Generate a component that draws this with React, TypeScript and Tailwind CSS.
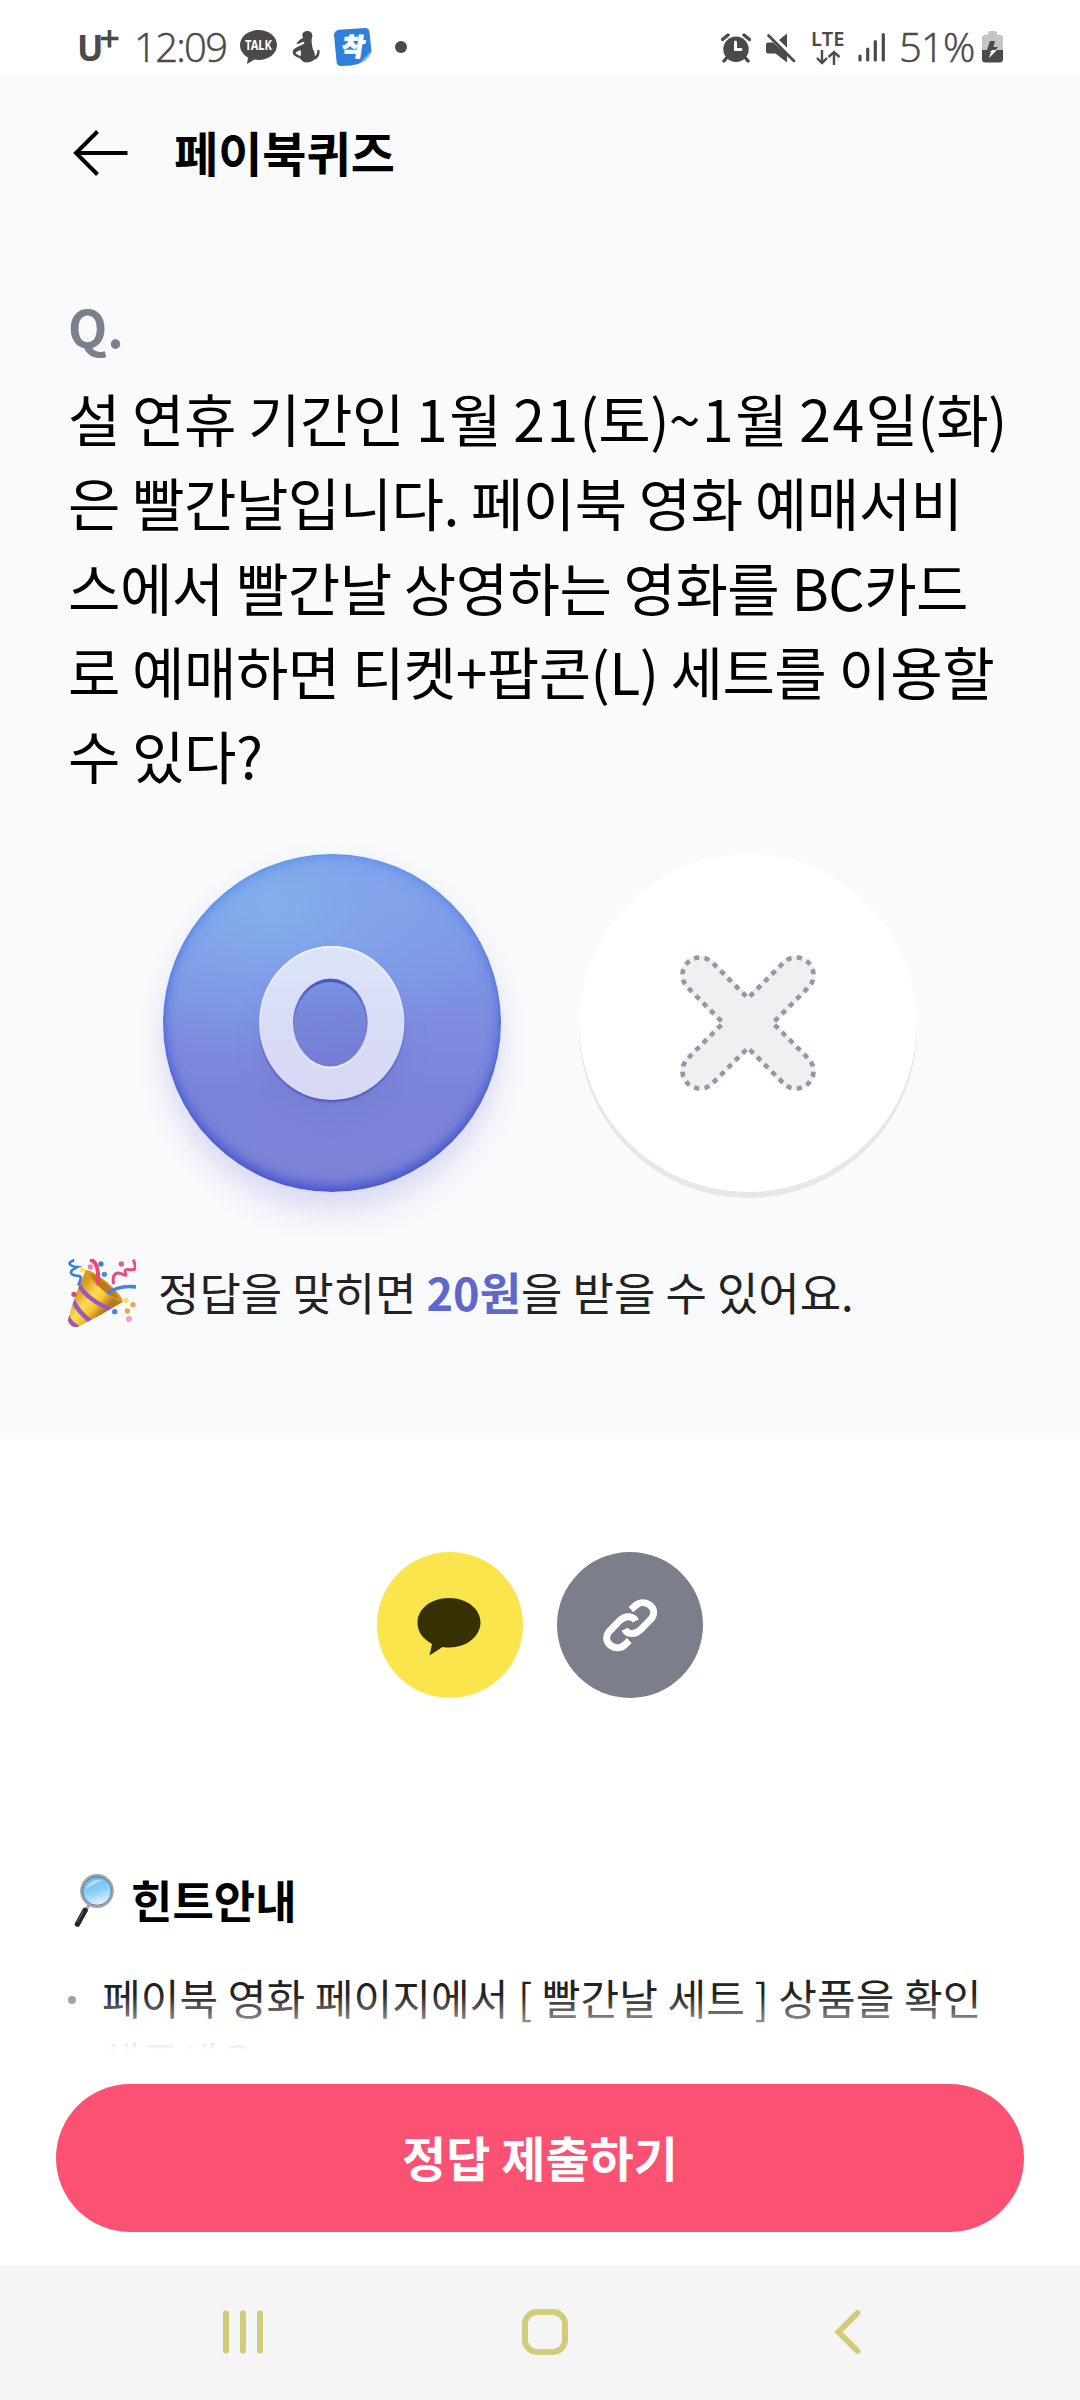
import React from "react";

const INK = "#4a4a4a";

function StatusBar() {
  return (
    <header className="flex h-[75px] items-start justify-between bg-white pl-[77px] pr-[77px] text-[#4a4a4a]">
      <div className="flex h-[75px] items-start">
        <div className="mt-[26px] flex w-[57px] items-start font-['Noto_Sans']">
          <span className="mt-[1px] text-[35px] leading-[42px] font-bold">U</span>
          <svg width="18" height="18" viewBox="0 0 18 18" className="-ml-[2px] mt-[4px]">
            <path d="M8.5 0V17.5M0 8.5H17.5" stroke={INK} strokeWidth="3.6" />
          </svg>
        </div>
        <span className="mt-[19px] block w-[106px] whitespace-nowrap font-['Open_Sans'] text-[40px] leading-[56px] font-[350] tracking-[-1.7px] [-webkit-text-stroke:0.5px_#4a4a4a]">
          12:09
        </span>
        <svg width="37" height="36" viewBox="0 0 37 36" className="mt-[29px]">
          <path
            d="M18.5 1C8.300 1 0 7.500 0 16C0 21.500 3.300 25.800 8 28.500L7 35L14.500 30.600C16 30.900 17.200 31 18.500 31C28.700 31 37 24.500 37 16C37 7.500 28.700 1 18.500 1Z"
            fill={INK}
          />
          <text x="18.5" y="20.500" textAnchor="middle" textLength="27" lengthAdjust="spacingAndGlyphs" fontSize="13.5" fontWeight="700" fontFamily="Noto Sans" fill="#fff">
            TALK
          </text>
        </svg>
        <svg width="28" height="32" viewBox="0 0 84 96" className="ml-[15px] mt-[31px]">
          <path
            d="M46 0C56 0 62 7 61 16C60 23 58 26 59 34C61 45 60 49 64 57C68 63 69 70 68 76C74 73 76 66 76 57L82 56C85 70 79 83 66 86C58 94 47 96 36 93C29 91 29 85 22 81C12 78 2 73 2 63C3 53 16 48 27 43C33 40 37 38 37 32C29 32 23 39 13 39C18 30 25 24 33 21C27 9 35 0 46 0ZM25 57L11 64C11 70 20 72 25 76C28 69 28 63 25 57Z"
            fill={INK}
            fillRule="evenodd"
          />
        </svg>
        <svg width="38" height="38" viewBox="0 0 38 38" className="ml-[14px] mt-[28px]">
          <path
            d="M5 1.800L31 0Q35 0 35.500 4L37.500 24Q32 36 17 37.500L7 38Q3 38 2.600 34L0 7Q0 3 5 1.800Z"
            fill="#2f7fdc"
          />
          <path d="M37.500 23L26 34.500Q35 31 37.500 23Z" fill="#8bbcf3" />
          <text
            x="19"
            y="28"
            textAnchor="middle"
            fontSize="25"
            fontWeight="900"
            fontFamily="Noto Sans CJK KR"
            fill="#fff"
            stroke="#fff"
            strokeWidth="0.8"
            transform="translate(3.500 0) skewX(-9)"
          >
            착
          </text>
        </svg>
        <span className="ml-[23px] mt-[41px] block size-[12px] rounded-full bg-[#4a4a4a]" />
      </div>

      <div className="flex h-[75px] items-start">
        <svg width="30" height="30" viewBox="0 0 30 30" className="mt-[33px]">
          <circle cx="15" cy="16.300" r="12.700" fill={INK} />
          <path d="M1.500 6.500L7 2M28.500 6.500L23 2M5.500 25L3 28M24.500 25L27 28" stroke={INK} strokeWidth="3.400" strokeLinecap="round" />
          <path d="M14.500 9V16.500H20" stroke="#fff" strokeWidth="3" strokeLinecap="round" fill="none" />
        </svg>
        <svg width="30" height="30" viewBox="0 0 30 30" className="ml-[15px] mt-[33px]">
          <path d="M0 11.500Q0 9.500 2 9.500H7L21 22V29.500L9.500 20.500H2Q0 20.500 0 18.500ZM13 7L21 0.500V14.500Z" fill={INK} />
          <path d="M2.500 2.500L28 28" stroke={INK} strokeWidth="2.600" strokeLinecap="round" />
        </svg>
        <div className="ml-[16px] mt-[30px] w-[36px]">
          <div className="-ml-[1px] font-['Noto_Sans'] text-[20px] leading-[18px] font-semibold tracking-[0.2px]">LTE</div>
          <svg width="24" height="15" viewBox="0 0 24 15" className="ml-[4px] mt-[2px]">
            <path d="M6 0V13M1 8L6 13L11 8M18 15V2M12.500 7L18 2L23.500 7" stroke={INK} strokeWidth="2.400" fill="none" />
          </svg>
        </div>
        <svg width="28" height="30" viewBox="0 0 28 30" className="ml-[10px] mt-[32px]">
          <path d="M2 24V28M9.700 17V28M17.300 9.500V28M25.300 2.500V28" stroke={INK} strokeWidth="3.200" strokeLinecap="round" />
        </svg>
        <span className="ml-[13px] mt-[19px] block w-[83px] whitespace-nowrap font-['Open_Sans'] text-[40px] leading-[56px] font-[350] tracking-[-0.8px] [-webkit-text-stroke:0.5px_#4a4a4a]">
          51%
        </span>
        <svg width="21" height="32" viewBox="0 0 21 32" className="mt-[31px]">
          <path d="M6 2Q6 0 8 0H13Q15 0 15 2V4H18Q21 4 21 7V19H0V7Q0 4 3 4H6Z" fill="#c4c4c4" />
          <path d="M0 19H21V28Q21 31.500 17.500 31.500H3.500Q0 31.500 0 28Z" fill={INK} />
          <path d="M8 10H13L11.500 16H16L13.500 19H5Z" fill={INK} />
          <path d="M10.500 19H15L7 27L9 21H7.500Z" fill="#fff" />
        </svg>
      </div>
    </header>
  );
}

function PartyPopper() {
  return (
    <svg width="68" height="68" viewBox="54 57 204 204" fill="none">
      <defs>
        <linearGradient id="cone" x1="75" y1="160" x2="150" y2="225" gradientUnits="userSpaceOnUse">
          <stop offset="0" stopColor="#d89a20" />
          <stop offset="0.45" stopColor="#fbdc52" />
          <stop offset="0.7" stopColor="#f6c832" />
          <stop offset="1" stopColor="#b9791a" />
        </linearGradient>
        <clipPath id="coneClip">
          <path d="M107 91L218 186Q150 228 84 260Q56 266 54 240Q72 170 107 91Z" />
        </clipPath>
      </defs>
      <path d="M107 91L218 186Q150 228 84 260Q56 266 54 240Q72 170 107 91Z" fill="url(#cone)" />
      <g clipPath="url(#coneClip)" stroke="#9b55c4" strokeWidth="13">
        <path d="M88 136Q112 180 182 208" />
        <path d="M68 180Q84 215 124 246" />
        <path d="M52 228Q60 250 84 262" />
      </g>
      <path d="M107 90C132 88 218 160 219 186C196 190 112 116 107 90Z" fill="#d99a24" />
      <path d="M121 101C144 102 200 156 208 178C176 168 136 137 121 101Z" fill="#bd7a17" />
      <path d="M120 59C139 62 147 86 144 134" stroke="#ed476d" strokeWidth="12" />
      <path d="M172 161C196 142 230 137 260 141" stroke="#4583e5" strokeWidth="11" />
      <path d="M73 60C48 69 60 79 82 81C54 94 60 105 79 107C101 108 91 116 85 137" stroke="#3b7edb" strokeWidth="8" />
      <path d="M191 132C184 98 202 92 224 106C236 108 211 84 239 89C260 92 259 82 250 59" stroke="#ec4b7d" strokeWidth="9" />
      <g>
        <circle cx="153" cy="72" r="8" fill="#3c7fdd" />
        <circle cx="163" cy="103" r="8" fill="#4b86e6" />
        <circle cx="194" cy="215" r="8" fill="#4b82dd" />
        <circle cx="214" cy="72" r="8" fill="#e95a7e" />
        <circle cx="72" cy="163" r="8" fill="#c9516c" />
        <circle cx="121" cy="81" r="8" fill="#ed86a8" />
        <circle cx="237" cy="237" r="9" fill="#eea0c5" />
        <circle cx="97" cy="90" r="8" fill="#f6e65b" />
        <circle cx="228" cy="181" r="8" fill="#f5e15c" />
        <circle cx="232" cy="213" r="8" fill="#efa149" />
        <circle cx="249" cy="194" r="8" fill="#f0a458" />
      </g>
    </svg>
  );
}

function Magnifier() {
  return (
    <svg width="40" height="54" viewBox="0 0 40 54">
      <defs>
        <linearGradient id="lens" x1="16" y1="4" x2="26" y2="34" gradientUnits="userSpaceOnUse">
          <stop offset="0" stopColor="#63b7f2" />
          <stop offset="0.5" stopColor="#8fd0fb" />
          <stop offset="1" stopColor="#eef8ff" />
        </linearGradient>
      </defs>
      <path d="M15.500 31L11 39" stroke="#a9a9a9" strokeWidth="3" />
      <path d="M11 37.500L3.500 51" stroke="#262626" strokeWidth="5.500" strokeLinecap="round" />
      <path d="M9.500 38L3 49" stroke="#666" strokeWidth="1" />
      <circle cx="23" cy="18" r="15.700" fill="url(#lens)" stroke="#a3a5a8" strokeWidth="2.400" />
      <circle cx="23" cy="18" r="14.300" fill="none" stroke="#4d7391" strokeWidth="0.900" />
      <path d="M12 16C14 9 20 6 28 7C21 11 16 13 12 16Z" fill="#fff" opacity="0.450" />
    </svg>
  );
}

const ARM = "M0 -24.75L35.6 -60.4A17.5 17.5 0 0 1 60.4 -35.6L24.75 0";

function Choices() {
  return (
    <div className="flex h-[338px] gap-[78px] pl-[163px]">
      <button
        aria-label="O"
        className="flex size-[338px] items-center justify-center rounded-full bg-[radial-gradient(ellipse_70%_46%_at_32%_15%,rgba(131,176,235,1)_0%,rgba(130,170,235,0.6)_40%,rgba(126,146,228,0)_100%),linear-gradient(180deg,#82a0ea_0%,#7f96e6_30%,#7e8cdf_50%,#7c84d9_70%,#7c83d7_100%)] shadow-[0_22px_28px_rgba(95,90,215,0.16),0_4px_24px_rgba(95,90,215,0.05),inset_0_-6px_11px_rgba(66,76,202,0.9),inset_0_3px_14px_rgba(90,150,240,0.75)]"
      >
        <svg width="200" height="200" viewBox="-100 -100 200 200" fillRule="evenodd" className="overflow-visible">
          <defs>
            <linearGradient id="ring" x1="0" y1="-77" x2="0" y2="77" gradientUnits="userSpaceOnUse">
              <stop offset="0" stopColor="#dce4f8" />
              <stop offset="0.5" stopColor="#d9dcf7" />
              <stop offset="1" stopColor="#d8d8f4" />
            </linearGradient>
            <linearGradient id="outerGlow" x1="0" y1="-77" x2="0" y2="10" gradientUnits="userSpaceOnUse">
              <stop offset="0" stopColor="#eef2fd" />
              <stop offset="1" stopColor="#eef2fd" stopOpacity="0" />
            </linearGradient>
            <linearGradient id="innerGlow" x1="0" y1="0" x2="0" y2="45" gradientUnits="userSpaceOnUse">
              <stop offset="0" stopColor="#f0f0fc" stopOpacity="0" />
              <stop offset="1" stopColor="#f0f0fc" />
            </linearGradient>
            <linearGradient id="innerShade" x1="0" y1="-45" x2="0" y2="0" gradientUnits="userSpaceOnUse">
              <stop offset="0" stopColor="#4652b9" />
              <stop offset="1" stopColor="#5a66c8" stopOpacity="0" />
            </linearGradient>
            <filter id="soft" x="-40%" y="-40%" width="180%" height="190%">
              <feGaussianBlur stdDeviation="16" />
            </filter>
            <filter id="edge" x="-10%" y="-10%" width="120%" height="120%">
              <feGaussianBlur stdDeviation="0.9" />
            </filter>
          </defs>
          <ellipse cx="0" cy="18" rx="68" ry="70" fill="#656bcb" opacity="0.320" filter="url(#soft)" />
          <path
            d="M-72.500 2.500a72.200 76.500 0 1 0 144.400 0a72.200 76.500 0 1 0 -144.400 0ZM-39 0a37.300 44.400 0 1 0 74.600 0a37.300 44.400 0 1 0 -74.600 0Z"
            fill="#4a55bb"
            filter="url(#edge)"
          />
          <ellipse cx="-1.700" cy="0.800" rx="37" ry="43.200" fill="none" stroke="url(#innerShade)" strokeWidth="3" />
          <path
            d="M-73 0a72.700 77 0 1 0 145.400 0a72.700 77 0 1 0 -145.400 0ZM-39 0a37.300 44.400 0 1 0 74.600 0a37.300 44.400 0 1 0 -74.600 0Z"
            fill="url(#ring)"
          />
          <ellipse cx="-0.300" cy="0" rx="71.700" ry="76" fill="none" stroke="url(#outerGlow)" strokeWidth="2" />
          <ellipse cx="-1.700" cy="0" rx="37.300" ry="44.400" fill="none" stroke="url(#innerGlow)" strokeWidth="2" />
        </svg>
      </button>
      <button
        aria-label="X"
        className="flex size-[338px] items-center justify-center rounded-full bg-white shadow-[0_6px_0_#e5e7e8]"
      >
        <svg width="160" height="160" viewBox="-80 -80 160 160">
          <path d="M-48 -48L48 48M48 -48L-48 48" stroke="#f0f0f3" strokeWidth="39" strokeLinecap="round" />
          {[0, 90, 180, 270].map((angle) => (
            <path
              key={angle}
              d={ARM}
              transform={`rotate(${angle})`}
              pathLength={150}
              fill="none"
              stroke="#9598a2"
              strokeWidth="4.600"
              strokeDasharray="5 5"
              strokeDashoffset="-2.5"
            />
          ))}
        </svg>
      </button>
    </div>
  );
}

function Num({ children }: { children: React.ReactNode }) {
  return <span className="tracking-[1.5px]">{children}</span>;
}

function Quiz() {
  return (
    <section className="h-[1364px] bg-[#f9fafc]">
      <div className="flex h-[155px] items-center pl-[73px]">
        <svg width="55" height="46" viewBox="0 0 55 46" fill="none">
          <path d="M24.500 1.500L3 23L24.500 44.500M3 23H54.500" stroke="#000" strokeWidth="4" />
        </svg>
        <h1 className="-mt-[3px] ml-[46px] text-[48px] leading-[70px] font-bold">페이북퀴즈</h1>
      </div>
      <div className="mt-[58px] pl-[68px] text-[51px] leading-[76px] font-bold text-[#7c7f8c]">Q.</div>
      <div className="mt-[11px] whitespace-nowrap pl-[68px] text-[57px] leading-[84.36px] tracking-[-0.55px] text-black">
        <p>
          설 연휴 기간인 <Num>1</Num>월 <Num>21</Num>(토)<Num>~1</Num>월 <Num>24</Num>일(화)
        </p>
        <p>은 빨간날입니다. 페이북 영화 예매서비</p>
        <p>스에서 빨간날 상영하는 영화를 BC카드</p>
        <p>로 예매하면 티켓+팝콘(L) 세트를 이용할</p>
        <p>수 있다?</p>
      </div>
      <div className="mt-[57px]">
        <Choices />
      </div>
      <div className="mt-[67px] flex h-[68px] items-center pl-[68px]">
        <PartyPopper />
        <p className="-mt-[2px] ml-[22px] whitespace-nowrap text-[45px] leading-[66px] text-[#222]">
          정답을 맞히면 <strong className="font-bold text-[#5f66cc]">20원</strong>을 받을 수 있어요.
        </p>
      </div>
    </section>
  );
}

function LinkIcon() {
  const half = "M812 238L826 225C853 202 896 232 874 264L841 298C825 314 801 314 793 297";
  return (
    <svg width="54.300" height="54.300" viewBox="728 203 163 163" fill="none" stroke="#fff" strokeWidth="21">
      <path d={half} />
      <path d={half} transform="rotate(180 809.5 284.5)" />
    </svg>
  );
}

function Share() {
  return (
    <div className="mt-[113px] flex h-[146px] justify-center gap-[34px]">
      <button aria-label="KakaoTalk" className="flex size-[146px] items-center justify-center rounded-full bg-[#fae54d]">
        <svg width="64" height="58" viewBox="0 0 64 58" className="-ml-[2px] mt-[3px]">
          <path d="M32 0C14 0 0.500 11 0.500 24.500C0.500 34 6 41 15 46L12.500 57.500L25.500 49Q29 49.500 32 49.500C50 49.500 63.500 38 63.500 24.500C63.500 11 50 0 32 0Z" fill="#373002" />
        </svg>
      </button>
      <button aria-label="Link" className="flex size-[146px] items-center justify-center rounded-full bg-[#7c7f8b]">
        <LinkIcon />
      </button>
    </div>
  );
}

function Hint() {
  return (
    <section className="relative mt-[166px] h-[186px] overflow-hidden">
      <div className="flex h-[72px] items-center pl-[74px]">
        <Magnifier />
        <h2 className="-mt-px ml-[17px] text-[45px] leading-[66px] font-bold">힌트안내</h2>
      </div>
      <div className="mt-[29px] flex pl-[68px]">
        <span className="mt-[31px] block size-[8px] rounded-full bg-[#999]" />
        <p className="ml-[26px] whitespace-nowrap text-[42px] leading-[63px] tracking-[0.1px] text-[#222]">
          페이북 영화 페이지에서 [ 빨간날 세트 ] 상품을 확인
          <br />
          해주세요.
        </p>
      </div>
      <div className="absolute inset-x-0 bottom-0 h-[56px] bg-linear-to-b from-white/0 to-white" />
    </section>
  );
}

function NavBar() {
  return (
    <nav className="mt-[33px] flex h-[135px] items-start bg-[#f5f5f5] pt-[44px]">
      <svg width="42" height="46" viewBox="0 0 42 46" className="ml-[222px]">
        <path d="M4 4.500V41.500M21 4.500V41.500M38 4.500V41.500" stroke="#d2cb7c" strokeWidth="6" strokeLinecap="round" />
      </svg>
      <span className="ml-[258px] block size-[46px] rounded-[15px] border-[6px] border-[#d2cb7c]" />
      <svg width="28" height="46" viewBox="0 0 28 46" fill="none" className="ml-[266px]">
        <path d="M23.500 4L4.500 23L23.500 42" stroke="#d2cb7c" strokeWidth="6" strokeLinecap="round" />
      </svg>
    </nav>
  );
}

export default function App() {
  return (
    <div className="h-[2400px] w-[1080px] overflow-hidden bg-white font-['Noto_Sans_CJK_KR',sans-serif] text-black">
      <StatusBar />
      <Quiz />
      <Share />
      <Hint />
      <div className="px-[56px] pt-[34px]">
        <button className="flex h-[148px] w-full items-center justify-center rounded-full bg-[#fb5274] pb-[4px] text-[48px] leading-[70px] font-bold text-white">
          정답 제출하기
        </button>
      </div>
      <NavBar />
    </div>
  );
}
